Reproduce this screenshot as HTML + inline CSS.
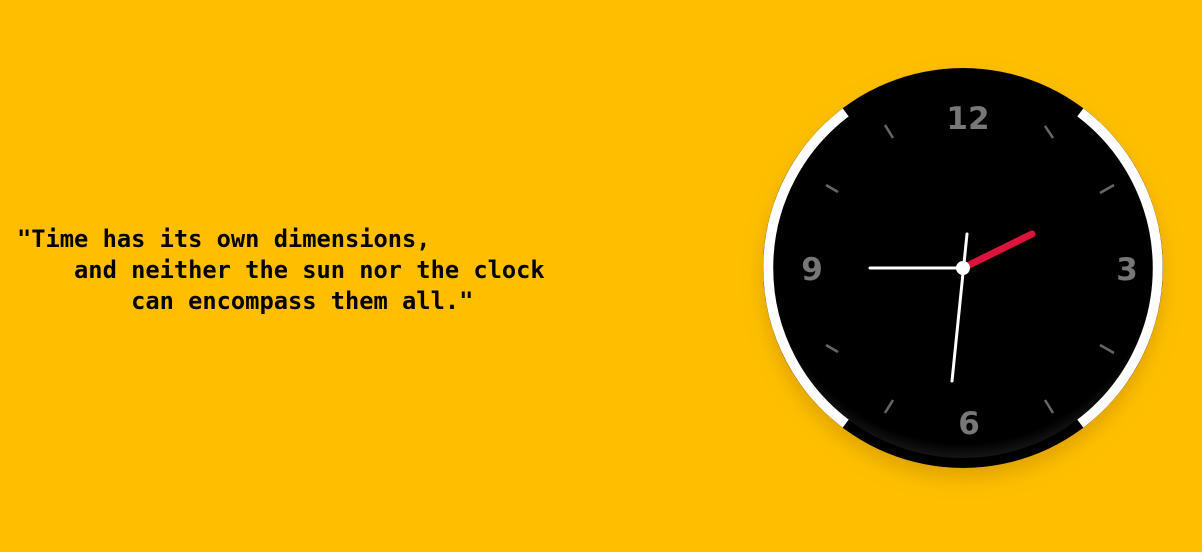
<!DOCTYPE html>
<html><head><style>
html,body{margin:0;padding:0;width:1202px;height:552px;background:#ffbf00;overflow:hidden}
pre{position:absolute;left:17px;top:224px;margin:0;font:bold 23.7px/31px "DejaVu Sans Mono","Liberation Mono",monospace;color:#000}
svg{position:absolute;left:0;top:0}
</style></head><body>
<pre>"Time has its own dimensions,
    and neither the sun nor the clock
        can encompass them all."</pre>
<svg width="1202" height="552">
<defs>
<radialGradient id="g" cx="0.5" cy="0.45" r="0.55">
<stop offset="0.93" stop-color="#000"/><stop offset="1" stop-color="#151515"/>
</radialGradient>
<filter id="s" x="-20%" y="-20%" width="140%" height="140%"><feDropShadow dx="0" dy="10" stdDeviation="10" flood-color="#a07000" flood-opacity="0.35"/></filter>
</defs>
<circle cx="963" cy="268" r="200" fill="#000" filter="url(#s)"/>
<circle cx="963" cy="268" r="190" fill="url(#g)"/>
<path d="M 845.7 112.4 A 195 195 0 0 0 845.7 423.6" stroke="#fff" stroke-width="10" fill="none"/>
<path d="M 1080.3 112.4 A 195 195 0 0 1 1080.3 423.6" stroke="#fff" stroke-width="10" fill="none"/>
<g stroke="#666" stroke-width="2.5">
<line x1="1045" y1="126" x2="1053" y2="138"/>
<line x1="1100" y1="193" x2="1114" y2="185"/>
<line x1="1100" y1="345" x2="1114" y2="353"/>
<line x1="1045" y1="400" x2="1053" y2="413"/>
<line x1="893" y1="400" x2="885" y2="413"/>
<line x1="826" y1="345" x2="838" y2="352"/>
<line x1="826" y1="185" x2="838" y2="192"/>
<line x1="885" y1="125" x2="893" y2="138"/>
</g>
<g fill="#777" font-family="DejaVu Sans,Liberation Sans,sans-serif" font-weight="bold" font-size="31" text-anchor="middle">
<text x="968" y="129">12</text>
<text x="1127" y="280">3</text>
<text x="812" y="280">9</text>
<text x="969" y="434">6</text>
</g>
<line x1="963" y1="268" x2="1032" y2="234" stroke="#dc143c" stroke-width="7" stroke-linecap="round"/>
<line x1="963" y1="268" x2="870" y2="268" stroke="#fff" stroke-width="3" stroke-linecap="round"/>
<line x1="967" y1="234" x2="952" y2="381" stroke="#fff" stroke-width="3" stroke-linecap="round"/>
<circle cx="963" cy="268" r="7" fill="#fff"/>
</svg>
</body></html>
